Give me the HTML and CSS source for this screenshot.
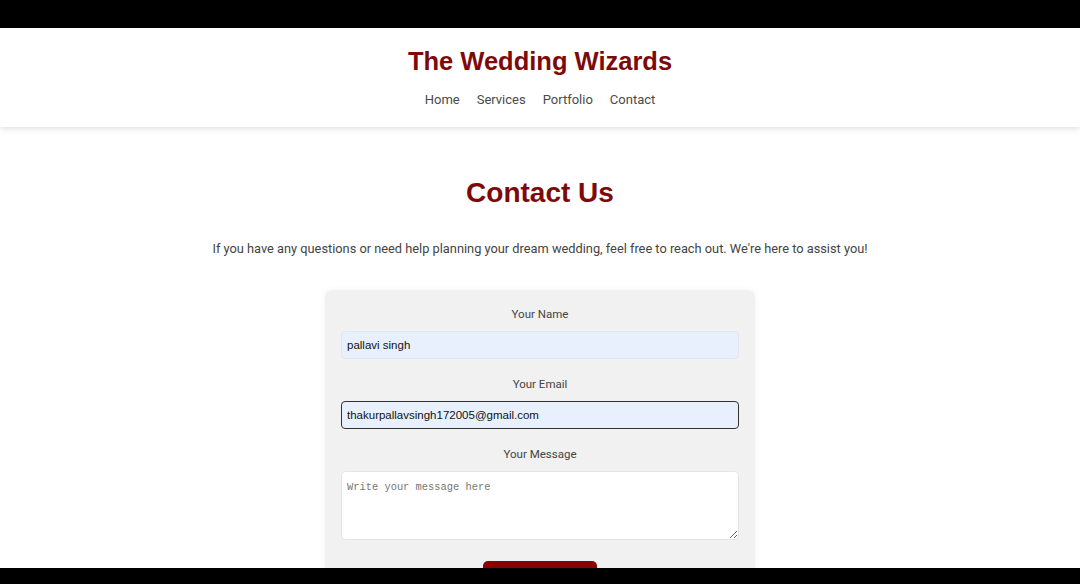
FILE: index.html
```html
<!DOCTYPE html>
<html lang="en">
<head>
<meta charset="utf-8">
<title>Contact Us - The Wedding Wizards</title>
<link rel="stylesheet" href="styles.css">
</head>
<body>
<div class="screen">
  <header class="site-header">
    <h1 class="brand">The Wedding Wizards</h1>
    <nav class="nav">
      <a href="#">Home</a>
      <a href="#">Services</a>
      <a href="#">Portfolio</a>
      <a href="#">Contact</a>
    </nav>
  </header>
  <main class="contact">
    <h2 class="contact-title">Contact Us</h2>
    <p class="intro">If you have any questions or need help planning your dream wedding, feel free to reach out. We're here to assist you!</p>
    <form class="card">
      <label class="label" for="name">Your Name</label>
      <input class="field filled" id="name" type="text" value="pallavi singh">
      <label class="label" for="email">Your Email</label>
      <input class="field filled focused" id="email" type="email" value="thakurpallavsingh172005@gmail.com">
      <label class="label" for="msg">Your Message</label>
      <textarea class="message" id="msg" placeholder="Write your message here"></textarea>
      <button class="send" type="button">Send Message</button>
    </form>
  </main>
</div>
</body>
</html>
```
FILE: styles.css
```css
html, body {
  margin: 0;
  padding: 0;
  background: #000;
}
.screen {
  margin-top: 28px;
  height: 540px;
  overflow: hidden;
  background: #fff;
  font-family: "Liberation Sans", Arial, sans-serif;
}
.site-header {
  background: #fff;
  box-shadow: 0 2px 6px rgba(0,0,0,0.12);
  padding: 18px 0 19px;
  text-align: center;
  position: relative;
}
.brand {
  margin: 0;
  font-size: 25.5px;
  line-height: 30px;
  font-weight: bold;
  color: #7d0a0a;
}
.nav {
  margin-top: 16px;
  display: flex;
  justify-content: center;
  gap: 17px;
  font-family: Roboto, "Liberation Sans", sans-serif;
  font-size: 13px;
  line-height: 16px;
}
.nav a {
  color: #4a4a4a;
  text-decoration: none;
}
.contact {
  display: flex;
  flex-direction: column;
  align-items: center;
  padding-top: 50px;
}
.contact-title {
  margin: 0;
  font-size: 28px;
  line-height: 32px;
  font-weight: bold;
  color: #7d0a0a;
}
.intro {
  margin: 32px 0 0;
  font-family: Roboto, "Liberation Sans", sans-serif;
  font-size: 12.8px;
  line-height: 16px;
  color: #444;
}
.card {
  margin-top: 33px;
  width: 430px;
  box-sizing: border-box;
  padding: 17px 16px 20px;
  background: #f1f1f1;
  border-radius: 8px;
  box-shadow: 0 0 6px rgba(0,0,0,0.06);
  display: flex;
  flex-direction: column;
  align-items: center;
}
.label {
  font-family: Roboto, "Liberation Sans", sans-serif;
  font-size: 11.5px;
  line-height: 14px;
  color: #444;
  margin-bottom: 10px;
}
.field {
  width: 100%;
  height: 28px;
  box-sizing: border-box;
  margin: 0 0 18px;
  padding: 0 5px;
  border: 1px solid #e2e6ee;
  border-radius: 4px;
  font-family: "Liberation Sans", Arial, sans-serif;
  font-size: 11.5px;
  color: #111;
  outline: none;
}
.filled {
  background: #e8f0fe;
}
.focused {
  border: 1.5px solid #333;
}
.message {
  display: block;
  width: 100%;
  height: 69px;
  box-sizing: border-box;
  margin: 0 0 21px;
  padding: 9px 5px;
  border: 1px solid #e4e4e4;
  border-radius: 4px;
  background: #fff;
  font-family: "Liberation Mono", monospace;
  font-size: 10.4px;
  line-height: 12px;
}
.message::placeholder {
  color: #777;
}
.send {
  width: 114px;
  height: 34px;
  border: none;
  border-radius: 5px;
  background: #8b0000;
  color: #fff;
  font-family: "Liberation Sans", Arial, sans-serif;
  font-size: 13px;
  padding-top: 12px;
}
```
